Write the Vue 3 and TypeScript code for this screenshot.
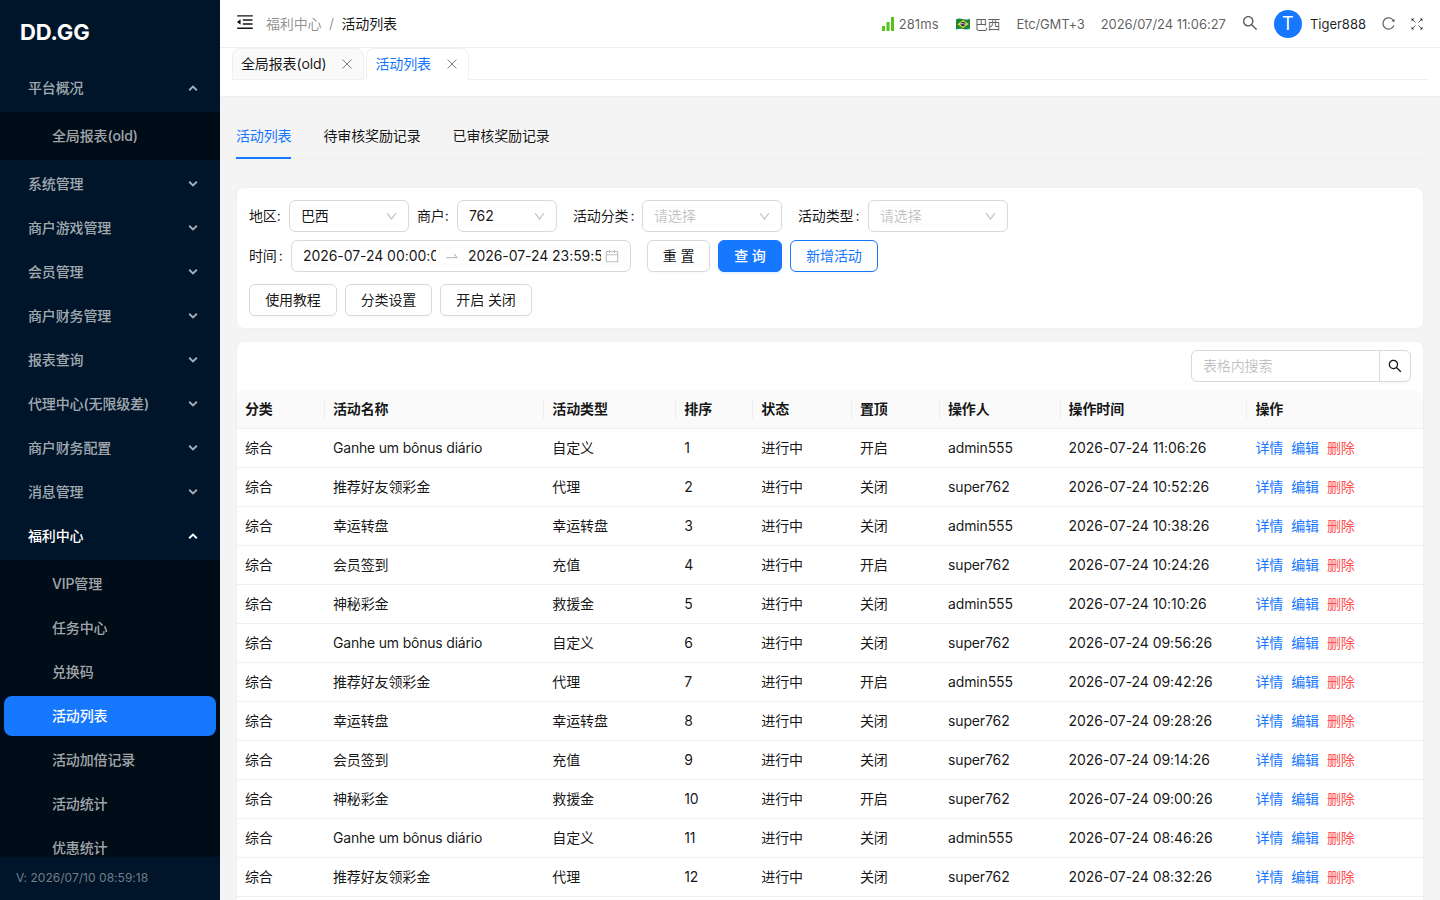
<script setup lang="ts">
interface MenuItem { label: string; open?: boolean; active?: boolean; children?: string[] }
interface Row { name: string; type: string; sort: number; top: string; user: string; time: string }

const menu: MenuItem[] = [
  { label: '平台概况', open: true, children: ['全局报表(old)'] },
  { label: '系统管理' },
  { label: '商户游戏管理' },
  { label: '会员管理' },
  { label: '商户财务管理' },
  { label: '报表查询' },
  { label: '代理中心(无限级差)' },
  { label: '商户财务配置' },
  { label: '消息管理' },
  {
    label: '福利中心', open: true, active: true,
    children: ['VIP管理', '任务中心', '兑换码', '活动列表', '活动加倍记录', '活动统计', '优惠统计'],
  },
]

const tabs = ['活动列表', '待审核奖励记录', '已审核奖励记录']
const columns = ['分类', '活动名称', '活动类型', '排序', '状态', '置顶', '操作人', '操作时间', '操作']

const kinds: [string, string][] = [
  ['Ganhe um bônus diário', '自定义'],
  ['推荐好友领彩金', '代理'],
  ['幸运转盘', '幸运转盘'],
  ['会员签到', '充值'],
  ['神秘彩金', '救援金'],
]
const details: [string, string, string][] = [
  ['开启', 'admin555', '11:06:26'],
  ['关闭', 'super762', '10:52:26'],
  ['关闭', 'admin555', '10:38:26'],
  ['开启', 'super762', '10:24:26'],
  ['关闭', 'admin555', '10:10:26'],
  ['关闭', 'super762', '09:56:26'],
  ['开启', 'admin555', '09:42:26'],
  ['关闭', 'super762', '09:28:26'],
  ['关闭', 'super762', '09:14:26'],
  ['开启', 'super762', '09:00:26'],
  ['关闭', 'admin555', '08:46:26'],
  ['关闭', 'super762', '08:32:26'],
]
const rows: Row[] = details.map(([top, user, time], i) => ({
  name: kinds[i % 5][0], type: kinds[i % 5][1], sort: i + 1, top, user, time: `2026-07-24 ${time}`,
}))

const icons = {
  down: 'M884 256h-75c-5.1 0-9.9 2.5-12.9 6.6L512 654.2 227.9 262.6c-3-4.1-7.8-6.6-12.9-6.6h-75c-6.5 0-10.3 7.4-6.5 12.7l352.6 486.1c12.8 17.6 39 17.6 51.7 0l352.6-486.1c3.9-5.3.1-12.7-6.4-12.7z',
  search: 'M909.6 854.5L649.9 594.8C690.2 542.7 712 479 712 412c0-80.2-31.3-155.4-87.9-212.1-56.6-56.7-132-87.9-212.1-87.9s-155.5 31.3-212.1 87.9C143.2 256.5 112 331.8 112 412c0 80.1 31.3 155.5 87.9 212.1C256.5 680.8 331.8 712 412 712c67 0 130.6-21.8 182.7-62l259.7 259.6a8.2 8.2 0 0011.6 0l43.6-43.5a8.2 8.2 0 000-11.6zM570.4 570.4C528 612.7 471.8 636 412 636s-116-23.3-158.4-65.6C211.3 528 188 471.8 188 412s23.3-116.1 65.6-158.4C296 211.3 352.2 188 412 188s116.1 23.2 158.4 65.6S636 352.2 636 412s-23.3 116.1-65.6 158.4z',
  fold: 'M408 442h480c4.4 0 8-3.6 8-8v-56c0-4.4-3.6-8-8-8H408c-4.4 0-8 3.6-8 8v56c0 4.4 3.6 8 8 8zm-8 204c0 4.4 3.6 8 8 8h480c4.4 0 8-3.6 8-8v-56c0-4.4-3.6-8-8-8H408c-4.4 0-8 3.6-8 8v56zm504-486H120c-4.4 0-8 3.6-8 8v56c0 4.4 3.6 8 8 8h784c4.4 0 8-3.6 8-8v-56c0-4.4-3.6-8-8-8zm0 632H120c-4.4 0-8 3.6-8 8v56c0 4.4 3.6 8 8 8h784c4.4 0 8-3.6 8-8v-56c0-4.4-3.6-8-8-8zM115.4 518.9L271.7 642c5.8 4.6 14.4.5 14.4-6.9V388.9c0-7.4-8.5-11.5-14.4-6.9L115.4 505.1a8.74 8.74 0 000 13.8z',
  swap: 'M873.1 596.2l-164-208A32 32 0 00684 376h-64.8c-6.7 0-10.4 7.7-6.3 13l144.3 183H152c-4.4 0-8 3.6-8 8v60c0 4.4 3.6 8 8 8h695.9c26.8 0 41.7-30.8 25.2-51.8z',
  calendar: 'M880 184H712v-64c0-4.4-3.6-8-8-8h-56c-4.4 0-8 3.6-8 8v64H384v-64c0-4.4-3.6-8-8-8h-56c-4.4 0-8 3.6-8 8v64H144c-17.7 0-32 14.3-32 32v664c0 17.7 14.3 32 32 32h736c17.7 0 32-14.3 32-32V216c0-17.7-14.3-32-32-32zm-40 656H184V460h656v380zM184 392V256h128v48c0 4.4 3.6 8 8 8h56c4.4 0 8-3.6 8-8v-48h256v48c0 4.4 3.6 8 8 8h56c4.4 0 8-3.6 8-8v-48h128v136H184z',
  reload: 'M909.1 209.3l-56.4 44.1C775.8 155.1 656.2 92 521.9 92 290 92 102.3 279.5 102 511.5 101.7 743.7 289.8 932 521.9 932c181.3 0 335.8-115 394.6-276.1 1.5-4.2-.7-8.9-4.9-10.3l-56.7-19.5a8 8 0 00-10.1 4.8c-1.8 5-3.8 10-5.9 14.9-17.3 41-42.1 77.8-73.7 109.4A344.77 344.77 0 01655.9 829c-42.3 17.9-87.4 27-133.8 27-46.5 0-91.5-9.1-133.8-27A341.5 341.5 0 01279 755.2a342.16 342.16 0 01-73.7-109.4c-17.9-42.4-27-87.4-27-133.9s9.1-91.5 27-133.9c17.3-41 42.1-77.8 73.7-109.4 31.6-31.6 68.4-56.4 109.3-73.8 42.3-17.9 87.4-27 133.8-27 46.5 0 91.5 9.1 133.8 27a341.5 341.5 0 01109.3 73.8c9.9 9.9 19.2 20.4 27.8 31.4l-60.2 47a8 8 0 003 14.1l175.6 43c5 1.2 9.9-2.6 9.9-7.7l.8-180.9c-.1-6.6-7.8-10.3-13-6.2z',
}
</script>

<template>
  <div class="app">
    <aside class="side">
      <div class="logo">DD.GG</div>
      <nav class="menu">
        <template v-for="m in menu" :key="m.label">
          <div class="item" :class="{ current: m.active }">
            <span>{{ m.label }}</span>
            <svg class="arrow" :class="{ up: m.open }" viewBox="0 0 10 10"><path d="M1.2 2.7 5 6.4 8.8 2.7" /></svg>
          </div>
          <div v-if="m.children" class="sub">
            <div v-for="c in m.children" :key="c" class="leaf" :class="{ selected: c === '活动列表' }">{{ c }}</div>
          </div>
        </template>
      </nav>
      <div class="version">V: 2026/07/10 08:59:18</div>
    </aside>

    <main class="main">
      <header class="header">
        <svg class="icon fold" viewBox="0 0 1024 1024"><path :d="icons.fold" /></svg>
        <div class="crumbs"><span>福利中心</span><i>/</i><b>活动列表</b></div>
        <div class="tools">
          <span class="ping">
            <svg viewBox="0 0 13 14"><path d="M0 9h3v5H0zM4.5 5h3v9h-3zM9 0h3v14H9z" /></svg>
            <em>281ms</em>
          </span>
          <span class="region">
            <svg viewBox="0 0 14 12">
              <path d="M0 1.4C3 0 5 .8 7 1.2s4 .6 7-.5v10c-3 1.2-5 .8-7 .4s-4-.8-7 .5z" fill="#14883f" />
              <path d="M7 2 12.6 6 7 10.3 1.4 6.3z" fill="#f7cf1d" />
              <circle cx="7" cy="6.1" r="2.4" fill="#20408f" />
              <path d="M4.8 5.5c1.6-.3 3.3.2 4.4 1.4" fill="none" stroke="#fff" stroke-width=".6" />
            </svg>
            <em>巴西</em>
          </span>
          <span class="zone">Etc/GMT+3</span>
          <span class="clock">2026/07/24 11:06:27</span>
          <svg class="icon find" viewBox="0 0 1024 1024"><path :d="icons.search" /></svg>
          <span class="avatar">T</span>
          <span class="user">Tiger888</span>
          <svg class="icon reload" viewBox="0 0 1024 1024"><path :d="icons.reload" /></svg>
          <svg class="shrink" viewBox="0 0 12 12">
            <path class="stem" d="M1.2 1.2l3.3 3.3M10.8 1.2 7.5 4.5M1.2 10.8l3.3-3.3M10.8 10.8 7.5 7.5" />
            <path class="tip" d="M.5.5h3l-3 3zM11.5.5h-3l3 3zM.5 11.5h3l-3-3zM11.5 11.5h-3l3-3z" />
          </svg>
        </div>
      </header>

      <div class="pages">
        <div class="pages-row">
          <div class="page"><span>全局报表(old)</span><svg viewBox="0 0 10 10"><path d="M.5.5l9 9M9.5.5l-9 9" /></svg></div>
          <div class="page on"><span>活动列表</span><svg viewBox="0 0 10 10"><path d="M.5.5l9 9M9.5.5l-9 9" /></svg></div>
          <div class="rest"></div>
        </div>
      </div>

      <div class="content">
        <div class="tabs">
          <div v-for="(t, i) in tabs" :key="t" class="tab" :class="{ on: i === 0 }">{{ t }}</div>
        </div>

        <section class="card filters">
          <div class="line">
            <label>地区:</label>
            <div class="select w120"><span>巴西</span><svg viewBox="0 0 1024 1024"><path :d="icons.down" /></svg></div>
            <label class="merchant">商户:</label>
            <div class="select w100"><span>762</span><svg viewBox="0 0 1024 1024"><path :d="icons.down" /></svg></div>
            <label class="wide">活动分类<i>:</i></label>
            <div class="select w140 empty"><span>请选择</span><svg viewBox="0 0 1024 1024"><path :d="icons.down" /></svg></div>
            <label class="wide last">活动类型<i>:</i></label>
            <div class="select w140 empty"><span>请选择</span><svg viewBox="0 0 1024 1024"><path :d="icons.down" /></svg></div>
          </div>
          <div class="line second">
            <label class="time">时间<i>:</i></label>
            <div class="range">
              <span class="date">2026-07-24 00:00:00</span>
              <svg class="swap" viewBox="0 0 1024 1024"><path :d="icons.swap" /></svg>
              <span class="date">2026-07-24 23:59:59</span>
              <svg class="cal" viewBox="0 0 1024 1024"><path :d="icons.calendar" /></svg>
            </div>
            <button class="btn reset">重 置</button>
            <button class="btn primary">查 询</button>
            <button class="btn ghost">新增活动</button>
          </div>
          <div class="line third">
            <button class="btn b1">使用教程</button>
            <button class="btn b2">分类设置</button>
            <button class="btn b3">开启 关闭</button>
          </div>
        </section>

        <section class="card list">
          <div class="searchbar">
            <div class="field">表格内搜索</div>
            <div class="go"><svg viewBox="0 0 1024 1024"><path :d="icons.search" /></svg></div>
          </div>
          <div class="row head">
            <div v-for="c in columns" :key="c" class="cell">{{ c }}</div>
          </div>
          <div v-for="r in rows" :key="r.sort" class="row">
            <div class="cell">综合</div>
            <div class="cell" :class="{ latin: r.name.startsWith('Ganhe') }">{{ r.name }}</div>
            <div class="cell">{{ r.type }}</div>
            <div class="cell">{{ r.sort }}</div>
            <div class="cell">进行中</div>
            <div class="cell">{{ r.top }}</div>
            <div class="cell">{{ r.user }}</div>
            <div class="cell stamp">{{ r.time }}</div>
            <div class="cell ops"><a>详情</a><a>编辑</a><a class="del">删除</a></div>
          </div>
        </section>
      </div>
    </main>
  </div>
</template>

<style>
body { margin: 0; overflow: hidden; }
</style>

<style scoped>
* { box-sizing: border-box; }
.app { display: flex; width: 1440px; height: 900px; overflow: hidden; font: 14px/22px Inter, "Noto Sans CJK SC", sans-serif; letter-spacing: -.13px; color: rgba(0, 0, 0, .92); background: #f4f4f4; }
i, em { font-style: normal; }
b { font-weight: 400; }
.side { width: 220px; flex: none; display: flex; flex-direction: column; background: #001529; color: rgba(255, 255, 255, .65); overflow: hidden; }
.logo { height: 64px; flex: none; padding-left: 20px; font-size: 22px; font-weight: 700; line-height: 64px; color: #fff; }
.menu { flex: 1; min-height: 0; overflow: hidden; padding-top: 4px; font-weight: 500; }
.item { height: 40px; margin: 0 4px 4px; padding: 0 18px 0 24px; display: flex; align-items: center; justify-content: space-between; }
.item.current { color: #fff; }
.arrow { width: 10px; height: 10px; fill: none; stroke: currentColor; stroke-width: 1.9; }
.arrow.up { transform: rotate(180deg); }
.sub { background: #000c17; padding: 4px; margin-bottom: 4px; display: flex; flex-direction: column; gap: 4px; }
.leaf { height: 40px; line-height: 40px; padding-left: 48px; border-radius: 8px; }
.leaf.selected { background: #1677ff; color: #fff; }
.version { height: 43px; flex: none; padding-left: 16px; font-size: 12px; line-height: 42px; letter-spacing: .03px; color: rgba(255, 255, 255, .45); }

.main { flex: 1; min-width: 0; display: flex; flex-direction: column; }
.header { height: 48px; flex: none; display: flex; align-items: center; padding: 0 16px; background: #fff; border-bottom: 1px solid #f0f0f0; }
.icon { fill: currentColor; flex: none; }
.fold { width: 20px; height: 20px; margin: 0 11px 3px -1px; }
.crumbs { display: flex; color: rgba(0, 0, 0, .45); }
.crumbs i { margin: 0 7.5px; }
.crumbs b { color: rgba(0, 0, 0, .92); }
.tools { margin-left: auto; margin-right: 1px; display: flex; align-items: center; font-size: 13px; letter-spacing: -.05px; color: rgba(0, 0, 0, .65); white-space: nowrap; }
.ping, .region { display: flex; align-items: center; }
.ping { margin-right: 17px; }
.ping em { letter-spacing: .1px; }
.ping svg { width: 13px; height: 14px; fill: #52c41a; margin-right: 4px; }
.region { margin-right: 16px; }
.region svg { width: 14px; height: 12px; margin-right: 5px; }
.zone { margin-right: 16px; letter-spacing: -.15px; }
.clock { margin-right: 15px; }
.find { width: 18px; height: 18px; margin: 0 15px 2px 0; }
.avatar { width: 28px; height: 28px; margin-right: 8px; border-radius: 50%; background: #1677ff; color: #fff; font-size: 18px; line-height: 28px; text-align: center; }
.user { color: rgba(0, 0, 0, .88); margin-right: 15px; letter-spacing: 0; }
.reload { width: 15px; height: 15px; margin-right: 15px; }
.shrink { width: 12px; height: 12px; }
.stem { fill: none; stroke: currentColor; stroke-width: 1; }
.tip { fill: currentColor; }

.pages { height: 49px; flex: none; padding: 0 12px; background: #fff; border-bottom: 1px solid #efefef; }
.pages-row { height: 32px; display: flex; }
.page { display: flex; align-items: center; height: 32px; padding: 0 11px 0 8px; border: 1px solid #f0f0f0; border-radius: 8px 8px 0 0; background: #fafafa; }
.page svg { width: 10px; height: 10px; margin-left: 16px; fill: none; stroke: rgba(0, 0, 0, .5); stroke-width: 1; }
.page.on { margin-left: 2px; background: #fff; color: #1677ff; border-bottom-color: #fff; }
.rest { flex: 1; border-bottom: 1px solid #f0f0f0; }

.content { flex: 1; min-height: 0; padding: 16px 16px 0; overflow: hidden; }
.tabs { height: 46px; display: flex; gap: 32px; border-bottom: 1px solid #efefef; }
.tab { height: 46px; line-height: 46px; flex: none; }
.tab.on { color: #1677ff; border-bottom: 2px solid #1677ff; }
.card { background: #fff; border: 1px solid #f0f0f0; border-radius: 8px; }
.filters { height: 142px; margin-top: 28px; padding: 12px; }
.line { height: 32px; display: flex; align-items: center; }
.second { margin-top: 8px; }
.third { margin-top: 12px; gap: 8px; }
label { flex: none; width: 40px; white-space: nowrap; }
label i { margin: 0 0 0 2px; }
.merchant { margin-left: 8px; }
.wide { width: 69px; margin-left: 16px; }
.last { width: 70px; }
.time { width: 42px; }
.select { height: 32px; display: flex; align-items: center; justify-content: space-between; padding: 0 10.5px 0 11px; border: 1px solid #d9d9d9; border-radius: 6px; flex: none; }
.select svg { width: 13px; height: 13px; fill: rgba(0, 0, 0, .27); }
.empty { color: rgba(0, 0, 0, .25); }
.w120 { width: 120px; }
.w100 { width: 100px; }
.w140 { width: 140px; }
.range { width: 340px; height: 32px; display: flex; align-items: center; padding: 0 11px; border: 1px solid #d9d9d9; border-radius: 6px; margin-right: 16px; letter-spacing: -.06px; }
.date { width: 133px; flex: none; overflow: hidden; white-space: nowrap; }
.swap { width: 16px; height: 16px; margin: 0 8px; fill: rgba(0, 0, 0, .25); flex: none; }
.cal { width: 16px; height: 16px; margin-left: 3px; fill: rgba(0, 0, 0, .25); flex: none; }
.btn { height: 32px; padding: 0; font: inherit; letter-spacing: inherit; color: rgba(0, 0, 0, .92); background: #fff; border: 1px solid #d9d9d9; border-radius: 6px; box-shadow: 0 2px 0 rgba(0, 0, 0, .02); white-space: nowrap; flex: none; }
.reset { width: 63px; margin-right: 8px; }
.primary { width: 64px; margin-right: 8px; background: #1677ff; border-color: #1677ff; color: #fff; font-weight: 500; box-shadow: 0 2px 0 rgba(5, 145, 255, .1); }
.ghost { width: 88px; border-color: #1677ff; color: #1677ff; }
.b1 { width: 88px; }
.b2 { width: 87px; }
.b3 { width: 92px; }

.list { margin-top: 12px; height: 600px; }
.searchbar { height: 48px; display: flex; justify-content: flex-end; padding: 8px 12px 0; }
.field { width: 189px; height: 32px; line-height: 30px; padding-left: 11px; color: rgba(0, 0, 0, .25); border: 1px solid #d9d9d9; border-radius: 6px 0 0 6px; }
.go { width: 32px; height: 32px; margin-left: -1px; display: flex; align-items: center; justify-content: center; border: 1px solid #d9d9d9; border-radius: 0 6px 6px 0; box-shadow: 0 2px 0 rgba(0, 0, 0, .02); }
.go svg { width: 16px; height: 16px; fill: currentColor; }
.row { height: 39px; display: grid; grid-template-columns: 88px 219.3px 132px 77px 98.7px 88px 120.6px 186.8px 1fr; align-items: center; border-bottom: 1px solid #f0f0f0; }
.cell { padding-left: 8px; white-space: nowrap; }
.latin { letter-spacing: -.2px; }
.stamp { letter-spacing: -.06px; }
.head { background: #fafafa; border-radius: 8px 8px 0 0; font-weight: 600; }
.head .cell:not(:last-child) { border-right: 1px solid #f0f0f0; }
.ops { display: flex; gap: 8px; }
.ops a { color: #1677ff; }
.ops .del { color: #ff4d4f; }
</style>
